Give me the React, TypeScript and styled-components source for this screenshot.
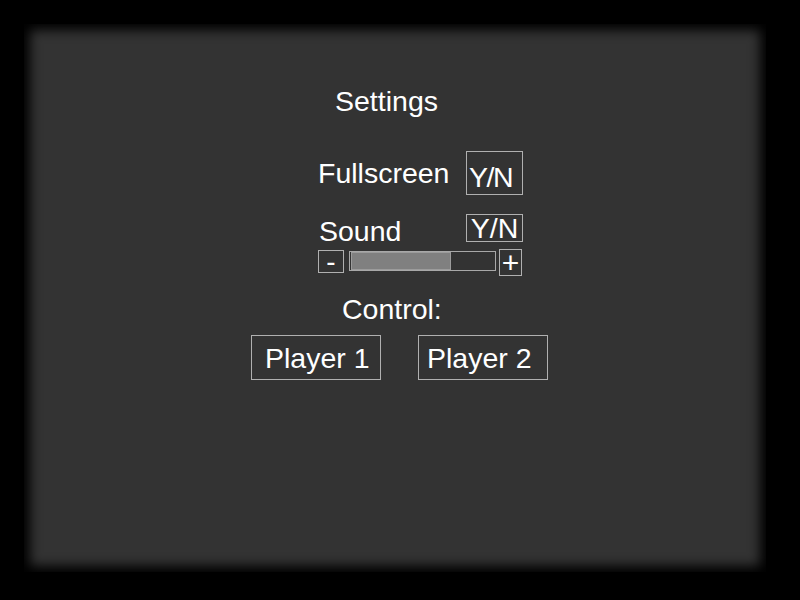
import React from "react";
import styled, { createGlobalStyle } from "styled-components";

const GlobalStyle = createGlobalStyle`
  html, body {
    margin: 0;
    padding: 0;
    background: #000;
  }
  body {
    width: 800px;
    height: 600px;
    overflow: hidden;
    font-family: "Liberation Sans", Arial, sans-serif;
    color: #fff;
  }
`;

const Screen = styled.div`
  width: 800px;
  height: 600px;
  background: #000;
  padding: 24px 0 0 24px;
  box-sizing: border-box;
`;

const Panel = styled.div`
  width: 742px;
  height: 548px;
  background: #333333;
  box-shadow: inset 0 0 12px 6px #000;
  display: flex;
  flex-direction: column;
  align-items: flex-start;
  font-size: 28.5px;
  line-height: 32px;
`;

const Heading = styled.div<{ $top: number; $left: number }>`
  margin-top: ${(p) => p.$top}px;
  margin-left: ${(p) => p.$left}px;
  white-space: nowrap;
`;

const OptionRow = styled.div<{ $top: number }>`
  display: flex;
  align-items: flex-start;
  margin-top: ${(p) => p.$top}px;
  margin-left: 294px;
  height: ${(p) => (p.$top > 20 ? 44 : 32)}px;
`;

const Label = styled.div<{ $top?: number; $pad?: number }>`
  width: 148px;
  box-sizing: border-box;
  margin-top: ${(p) => p.$top ?? 0}px;
  padding-left: ${(p) => p.$pad ?? 0}px;
  white-space: nowrap;
`;

const Toggle = styled.div<{ $tall?: boolean }>`
  width: 57px;
  height: ${(p) => (p.$tall ? 44 : 28)}px;
  margin-top: ${(p) => (p.$tall ? 0 : 2)}px;
  box-sizing: border-box;
  border: 1px solid #b0b0b0;
  padding: ${(p) => (p.$tall ? "9px 0 0 2px" : "0")};
  line-height: ${(p) => (p.$tall ? 32 : 27)}px;
  text-align: ${(p) => (p.$tall ? "left" : "center")};
  letter-spacing: ${(p) => (p.$tall ? "-1.5px" : "0")};
  white-space: nowrap;
`;

const VolumeRow = styled.div`
  display: flex;
  align-items: flex-start;
  margin-top: 5px;
  margin-left: 294px;
`;

const StepButton = styled.div<{ $w: number; $h: number; $top: number; $size: number }>`
  width: ${(p) => p.$w}px;
  height: ${(p) => p.$h}px;
  margin-top: ${(p) => p.$top}px;
  box-sizing: border-box;
  border: 1px solid #b0b0b0;
  display: flex;
  justify-content: center;
  font-size: ${(p) => p.$size}px;
  line-height: ${(p) => p.$h - 2}px;
`;

const Track = styled.div`
  width: 147px;
  height: 20px;
  margin: 2px 3px 0 5px;
  box-sizing: border-box;
  border: 1px solid #a8a8a8;
  padding: 0 1px;
  display: flex;
`;

const Fill = styled.div`
  height: 100%;
  box-sizing: border-box;
  background: #808080;
  border: 1px solid #9c9c9c;
`;

const PlayerRow = styled.div`
  display: flex;
  gap: 37px;
  margin-top: 10px;
  margin-left: 227px;
`;

const PlayerButton = styled.div<{ $pad: number }>`
  width: 130px;
  height: 45px;
  box-sizing: border-box;
  border: 1px solid #b0b0b0;
  padding: 6px 0 0 ${(p) => p.$pad}px;
  white-space: nowrap;
`;

export default function App() {
  const volume = 0.69;
  return (
    <Screen>
      <GlobalStyle />
      <Panel>
        <Heading $top={61} $left={311}>Settings</Heading>
        <OptionRow $top={34}>
          <Label $top={6}>Fullscreen</Label>
          <Toggle $tall>Y/N</Toggle>
        </OptionRow>
        <OptionRow $top={17}>
          <Label $top={3} $pad={1}>Sound</Label>
          <Toggle>Y/N</Toggle>
        </OptionRow>
        <VolumeRow>
          <StepButton $w={26} $h={23} $top={1} $size={28}>-</StepButton>
          <Track>
            <Fill style={{ width: `${Math.round(volume * 145)}px` }} />
          </Track>
          <StepButton $w={23} $h={27} $top={0} $size={30}>+</StepButton>
        </VolumeRow>
        <Heading $top={17} $left={318}>Control:</Heading>
        <PlayerRow>
          <PlayerButton $pad={13}>Player 1</PlayerButton>
          <PlayerButton $pad={8}>Player 2</PlayerButton>
        </PlayerRow>
      </Panel>
    </Screen>
  );
}
